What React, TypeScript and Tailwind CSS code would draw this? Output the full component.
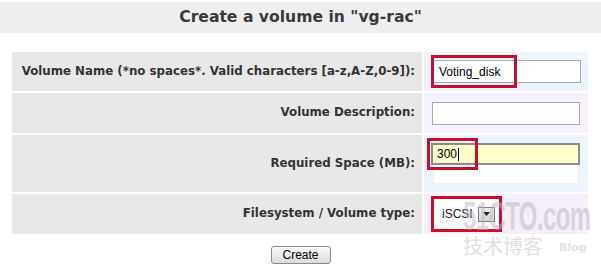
import React from "react";

const labelFont = { fontFamily: '"DejaVu Sans", Verdana, sans-serif' };
const inputFont = { fontFamily: '"Liberation Sans", Tahoma, sans-serif' };

function Label({ children }: { children: React.ReactNode }) {
  return (
    <div className="bg-[#e8e8e8] flex items-center justify-end pr-[7px] text-[11.8px] font-bold text-[#333]">
      {children}
    </div>
  );
}

export default function App() {
  return (
    <div
      className="relative w-[601px] h-[269px] bg-white overflow-hidden"
      style={labelFont}
    >
      {/* Title */}
      <div className="mt-[2px] h-[31px] bg-[#efefef] flex items-center justify-center">
        <h1 className="text-[15.6px] font-bold text-[#3a3a3a]">
          Create a volume in "vg-rac"
        </h1>
      </div>

      {/* Form table */}
      <div className="ml-[12px] mt-[19px] grid grid-cols-[410px_164px] grid-rows-[39px_40px_57px_40px] gap-[2px]">
        <Label>Volume Name (*no spaces*. Valid characters [a-z,A-Z,0-9]):</Label>
        <div className="bg-[#eef4fb] flex items-center pl-[9px]">
          <div
            className="relative w-[148px] h-[23px] border border-[#a5acb5] bg-white flex items-center pl-[5px] text-[12px] text-black"
            style={inputFont}
          >
            Voting_disk
            <div className="absolute left-[-3px] top-[-6px] w-[86px] h-[33px] border-[3px] border-[#c8102e]" />
          </div>
        </div>

        <Label>Volume Description:</Label>
        <div className="bg-[#f6f1fb] flex items-center pl-[8px]">
          <div className="w-[148px] h-[23px] border border-[#a5acb5] bg-white" />
        </div>

        <Label>Required Space (MB):</Label>
        <div className="bg-[#eef4fb] flex flex-col pl-[7px] pt-[8px]">
          <div
            className="relative w-[149px] h-[22px] border-2 border-[#8c8c8c] bg-[#ffffcc] flex items-center pl-[4px] text-[12px] text-black"
            style={inputFont}
          >
            300<span className="inline-block w-px h-[13px] bg-black ml-px" />
            <div className="absolute left-[-6px] top-[-7px] w-[51px] h-[32px] border-[3px] border-[#c8102e]" />
          </div>
          <div className="ml-[3px] w-[143px] h-[18px] bg-white" />
        </div>

        <Label>Filesystem / Volume type:</Label>
        <div className="bg-[#f6eefa] flex items-center pl-[7px]">
          <div
            className="relative w-[71px] h-[36px] border-[3px] border-[#c8102e] bg-white flex items-center pl-[8px] gap-[5px] text-[12px] text-[#222]"
            style={inputFont}
          >
            iSCSI
            <span className="w-[17px] h-[15px] border border-[#7a7a7a] bg-gradient-to-b from-[#f2f2f2] to-[#d6d6d6] flex items-center justify-center">
              <svg width="7" height="4" viewBox="0 0 7 4">
                <path d="M0 0H7L3.5 4Z" fill="#222" />
              </svg>
            </span>
          </div>
        </div>
      </div>

      {/* Button */}
      <div className="mt-[12px] flex justify-center">
        <button
          className="w-[60px] h-[18px] rounded-[3px] border border-[#8a8a8a] bg-gradient-to-b from-[#fbfbfb] to-[#dcdcdc] text-[12px] text-black leading-none"
          style={inputFont}
        >
          Create
        </button>
      </div>

      {/* Watermark */}
      <div className="absolute left-[463px] top-[199px] pointer-events-none select-none opacity-50">
        <div
          className="text-[40px] leading-[34px] font-bold text-[#b9b9c3] tracking-[-1px] scale-x-[0.6] origin-left"
          style={{ fontFamily: '"Liberation Sans Narrow", "Liberation Sans", sans-serif' }}
        >
          51CTO.com
        </div>
        <div className="flex items-end gap-[16px] mt-[3px]">
          <span
            className="text-[20px] leading-[20px] text-[#c4c4c4]"
            style={{ fontFamily: '"Noto Sans CJK SC", sans-serif' }}
          >
            技术博客
          </span>
          <span className="text-[11px] leading-[17px] font-bold text-[#c4c4c4]">Blog</span>
        </div>
      </div>
    </div>
  );
}
